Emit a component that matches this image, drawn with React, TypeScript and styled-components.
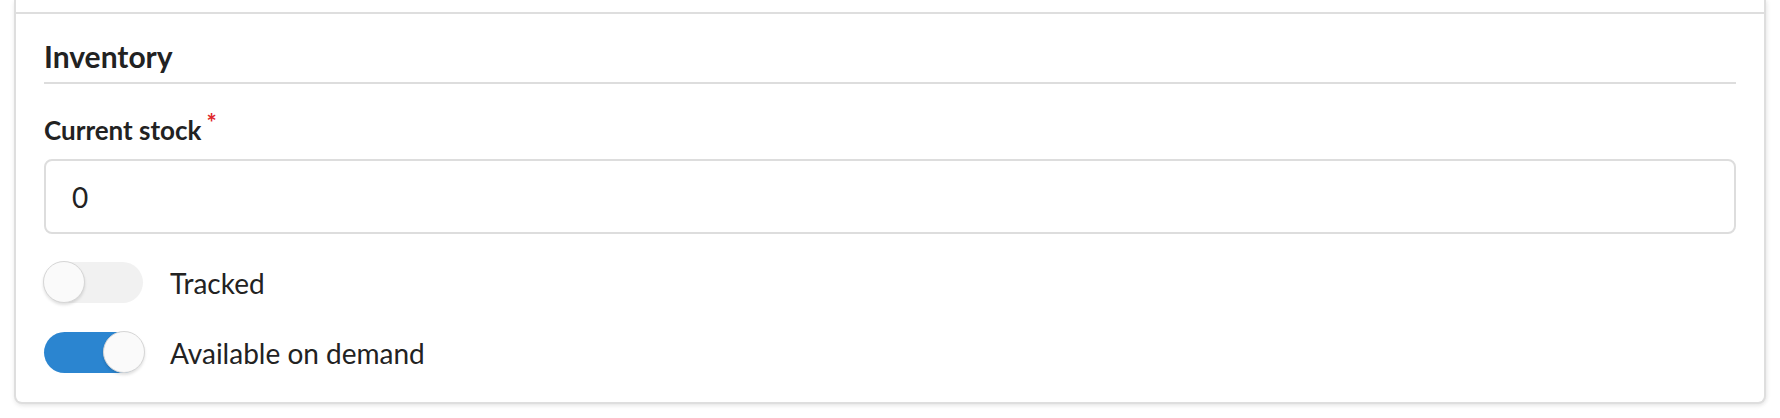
import React from "react";
import styled, { createGlobalStyle } from "styled-components";

const Global = createGlobalStyle`
  html, body { margin: 0; padding: 0; background: #ffffff; }
  body { font-family: Lato, "Open Sans", Arial, sans-serif; color: #222; }
`;

const Page = styled.div`
  padding: 0 14px 16px 14px;
`;

const Card = styled.div`
  background: #fff;
  border: 2px solid #dedede;
  border-top: none;
  border-radius: 0 0 8px 8px;
  box-shadow: 0 2px 4px rgba(0, 0, 0, 0.08), 2px 0 4px rgba(0, 0, 0, 0.04);
  padding-top: 12px;
`;

const Section = styled.section`
  border-top: 2px solid #dedede;
  padding: 24px 28px 29px 28px;
`;

const Heading = styled.h2`
  margin: 0;
  font-size: 30px;
  line-height: 36px;
  font-weight: 700;
  color: #222;
  padding-bottom: 8px;
  border-bottom: 2px solid #dddddd;
`;

const Field = styled.div`
  margin-top: 31px;
  display: flex;
  flex-direction: column;
`;

const Label = styled.label`
  font-size: 26px;
  line-height: 31px;
  font-weight: 700;
  color: #222;
`;

const Required = styled.sup`
  color: #e0282b;
  font-size: 24px;
  font-weight: 700;
  margin-left: 5px;
  vertical-align: 8px;
  line-height: 0;
`;

const Input = styled.input`
  margin-top: 13px;
  box-sizing: border-box;
  height: 75px;
  width: 100%;
  border: 2px solid #dddddd;
  border-radius: 8px;
  padding: 0 26px;
  font-family: Lato, Arial, sans-serif;
  font-size: 28px;
  color: #222;
  outline: none;
`;

const Toggles = styled.div`
  margin-top: 28px;
  display: flex;
  flex-direction: column;
  gap: 29px;
`;

const ToggleRow = styled.div`
  display: flex;
  align-items: center;
  gap: 27px;
  height: 41px;
`;

const Track = styled.div<{ $on: boolean }>`
  position: relative;
  width: 99px;
  height: 41px;
  border-radius: 21px;
  background: ${(p) => (p.$on ? "#2b85d0" : "#f1f1f1")};
  flex-shrink: 0;
`;

const Knob = styled.div<{ $on: boolean }>`
  position: absolute;
  top: -1px;
  ${(p) => (p.$on ? "right: -2px;" : "left: -1px;")}
  width: 42px;
  height: 42px;
  box-sizing: border-box;
  border-radius: 50%;
  background: #fafafa;
  border: 1.5px solid #d6d6d6;
  box-shadow: 0 2px 3px rgba(0, 0, 0, 0.12);
`;

const ToggleLabel = styled.span`
  font-size: 28px;
  line-height: 34px;
  color: #222;
`;

const Toggle: React.FC<{ on: boolean; label: string }> = ({ on, label }) => (
  <ToggleRow>
    <Track $on={on}>
      <Knob $on={on} />
    </Track>
    <ToggleLabel>{label}</ToggleLabel>
  </ToggleRow>
);

export default function App() {
  return (
    <>
      <Global />
      <Page>
        <Card>
          <Section>
            <Heading>Inventory</Heading>
            <Field>
              <Label>
                Current stock<Required>*</Required>
              </Label>
              <Input defaultValue="0" />
            </Field>
            <Toggles>
              <Toggle on={false} label="Tracked" />
              <Toggle on={true} label="Available on demand" />
            </Toggles>
          </Section>
        </Card>
      </Page>
    </>
  );
}
